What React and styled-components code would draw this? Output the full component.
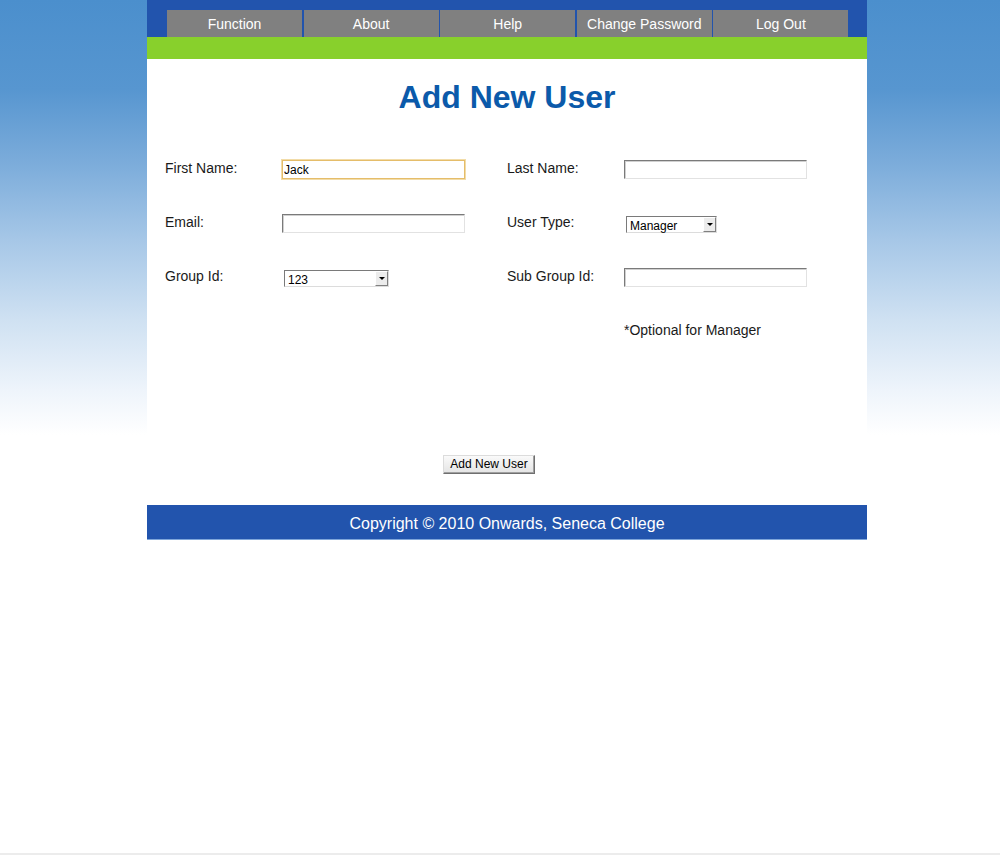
import React from "react";
import styled, { createGlobalStyle } from "styled-components";

const GlobalStyle = createGlobalStyle`
  html, body {
    margin: 0;
    padding: 0;
  }
  body {
    font-family: "Liberation Sans", Arial, sans-serif;
    background: #fff linear-gradient(
      to bottom,
      #4b8fcd 0px,
      #5796d0 90px,
      #7aabda 160px,
      #a6c7e7 240px,
      #cfe1f2 320px,
      #eef4fb 390px,
      #ffffff 435px
    ) no-repeat;
    background-size: 100% 440px;
  }
`;

const Page = styled.div`
  min-height: 853px;
  border-bottom: 2px solid #ececec;
`;

const Container = styled.div`
  width: 720px;
  margin-left: 147px;
`;

const Header = styled.div`
  background: #2254ad;
  padding: 10px 0 0 20px;
  display: flex;
  gap: 1.6px;
`;

const Tab = styled.a`
  width: 135px;
  height: 27px;
  background: #808080;
  color: #fff;
  font-size: 14px;
  display: flex;
  align-items: center;
  justify-content: center;
  text-decoration: none;
  cursor: pointer;
`;

const GreenBar = styled.div`
  height: 22px;
  background: #88d02c;
`;

const Content = styled.div`
  background: #fff;
  height: 446px;
  padding: 0 18px;
  box-sizing: border-box;
`;

const Title = styled.h1`
  margin: 0;
  padding-top: 19px;
  height: 60px;
  text-align: center;
  font-size: 32px;
  font-weight: bold;
  color: #0b5aaa;
  line-height: 38px;
`;

const FormGrid = styled.div`
  margin-top: 22px;
  display: grid;
  grid-template-columns: 117px 225px 117px 1fr;
  grid-auto-rows: 54px;
  color: #1a1a1a;
  font-size: 14px;
`;

const Label = styled.div`
  line-height: 19px;
  margin-top: -1px;
`;

const Cell = styled.div`
  padding-left: ${(p) => p.$indent || 0}px;
  padding-top: ${(p) => p.$top || 0}px;
`;

const TextInput = styled.input`
  display: block;
  width: 183px;
  height: 19px;
  box-sizing: border-box;
  margin: 0;
  padding: 1px 1px;
  font-family: "Liberation Sans", Arial, sans-serif;
  font-size: 12px;
  color: #000;
  background: #fff;
  border: 1px solid;
  border-color: ${(p) =>
    p.$focused ? "#e5bd6a" : "#7a7a7a #e2e2e2 #e2e2e2 #7a7a7a"};
  box-shadow: ${(p) =>
    p.$focused ? "0 0 0 1px #f2dca8" : "inset 1px 1px 0 #d0d0d0"};
  outline: none;
`;

const SelectBox = styled.div`
  position: relative;
  width: ${(p) => p.$width}px;
  height: 17px;
  box-sizing: border-box;
  border: 1px solid;
  border-color: #7a7a7a #dcdcdc #dcdcdc #7a7a7a;
  background: #fff;
`;

const NativeSelect = styled.select`
  appearance: none;
  -webkit-appearance: none;
  border: none;
  background: transparent;
  width: 100%;
  height: 15px;
  padding: 0 0 0 3px;
  margin: 0;
  font-family: "Liberation Sans", Arial, sans-serif;
  font-size: 12px;
  line-height: 15px;
  color: #000;
  outline: none;
`;

const ArrowButton = styled.span`
  position: absolute;
  right: 0;
  top: 0;
  width: 13px;
  height: 15px;
  box-sizing: border-box;
  background: #ececec;
  border: 1px solid;
  border-color: #fff #808080 #808080 #fff;
  display: flex;
  align-items: center;
  justify-content: center;
  pointer-events: none;

  &::after {
    content: "";
    border-left: 3px solid transparent;
    border-right: 3px solid transparent;
    border-top: 3px solid #000;
  }
`;

const Note = styled.div`
  font-size: 14px;
  color: #1a1a1a;
  line-height: 19px;
  margin-top: -1px;
`;

const ButtonRow = styled.div`
  display: flex;
  justify-content: center;
  margin-top: 79px;
  padding-right: 36px;
`;

const SubmitButton = styled.button`
  height: 19px;
  padding: 0 6px;
  font-family: "Liberation Sans", Arial, sans-serif;
  font-size: 12px;
  color: #000;
  background: linear-gradient(#fafafa, #e4e4e4);
  border: 1px solid;
  border-color: #dcdcdc #6f6f6f #6f6f6f #dcdcdc;
  box-shadow: inset -1px -1px 0 #a0a0a0;
  line-height: 15px;
  cursor: pointer;
`;

const Footer = styled.div`
  background: #2254ad;
  height: 35px;
  padding-top: 4px;
  color: #fff;
  font-size: 16px;
  display: flex;
  align-items: center;
  justify-content: center;
  border-bottom: 1px solid #7fa6da;
  box-sizing: border-box;
`;

function Select({ width, options }) {
  return (
    <SelectBox $width={width}>
      <NativeSelect defaultValue={options[0]}>
        {options.map((o) => (
          <option key={o}>{o}</option>
        ))}
      </NativeSelect>
      <ArrowButton />
    </SelectBox>
  );
}

const tabs = ["Function", "About", "Help", "Change Password", "Log Out"];

export default function App() {
  return (
    <>
      <GlobalStyle />
      <Page>
        <Container>
          <Header>
            {tabs.map((t) => (
              <Tab key={t}>{t}</Tab>
            ))}
          </Header>
          <GreenBar />
          <Content>
            <Title>Add New User</Title>
            <FormGrid>
              <Label>First Name:</Label>
              <Cell>
                <TextInput defaultValue="Jack" $focused />
              </Cell>
              <Label>Last Name:</Label>
              <Cell>
                <TextInput />
              </Cell>

              <Label>Email:</Label>
              <Cell>
                <TextInput />
              </Cell>
              <Label>User Type:</Label>
              <Cell $indent={2} $top={2}>
                <Select width={91} options={["Manager", "Employee"]} />
              </Cell>

              <Label>Group Id:</Label>
              <Cell $indent={2} $top={2}>
                <Select width={105} options={["123", "456"]} />
              </Cell>
              <Label>Sub Group Id:</Label>
              <Cell>
                <TextInput />
              </Cell>

              <div />
              <div />
              <div />
              <Note>*Optional for Manager</Note>
            </FormGrid>
            <ButtonRow>
              <SubmitButton>Add New User</SubmitButton>
            </ButtonRow>
          </Content>
          <Footer>Copyright © 2010 Onwards, Seneca College</Footer>
        </Container>
      </Page>
    </>
  );
}
